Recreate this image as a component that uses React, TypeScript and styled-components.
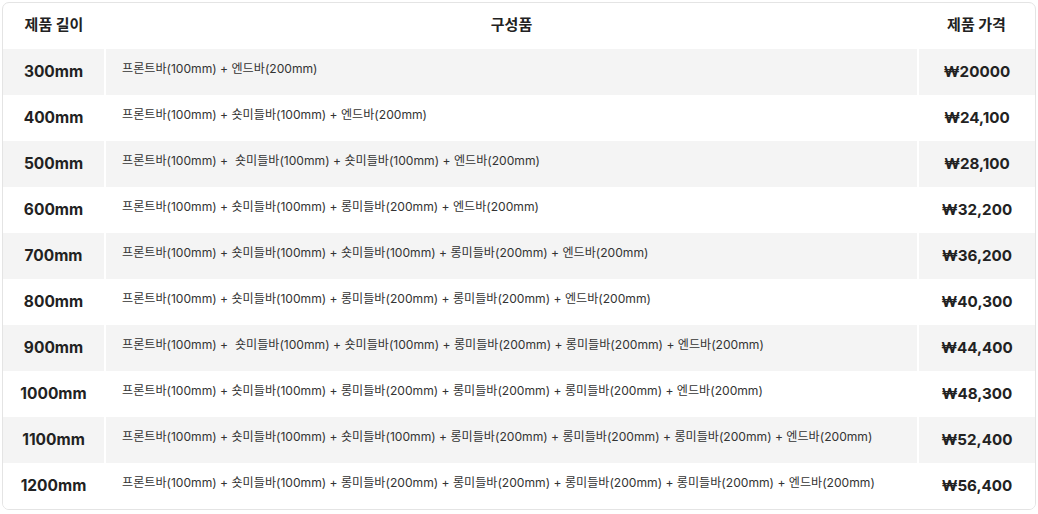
import type { FC } from "react";
import styled, { createGlobalStyle } from "styled-components";

interface PriceRow {
  length: string;
  parts: string;
  price: string;
}

const rows: PriceRow[] = [
  { length: "300mm", parts: "프론트바(100mm) + 엔드바(200mm)", price: "₩20000" },
  { length: "400mm", parts: "프론트바(100mm) + 숏미들바(100mm) + 엔드바(200mm)", price: "₩24,100" },
  {
    length: "500mm",
    parts: "프론트바(100mm) +  숏미들바(100mm) + 숏미들바(100mm) + 엔드바(200mm)",
    price: "₩28,100",
  },
  {
    length: "600mm",
    parts: "프론트바(100mm) + 숏미들바(100mm) + 롱미들바(200mm) + 엔드바(200mm)",
    price: "₩32,200",
  },
  {
    length: "700mm",
    parts:
      "프론트바(100mm) + 숏미들바(100mm) + 숏미들바(100mm) + 롱미들바(200mm) + 엔드바(200mm)",
    price: "₩36,200",
  },
  {
    length: "800mm",
    parts:
      "프론트바(100mm) + 숏미들바(100mm) + 롱미들바(200mm) + 롱미들바(200mm) + 엔드바(200mm)",
    price: "₩40,300",
  },
  {
    length: "900mm",
    parts:
      "프론트바(100mm) +  숏미들바(100mm) + 숏미들바(100mm) + 롱미들바(200mm) + 롱미들바(200mm) + 엔드바(200mm)",
    price: "₩44,400",
  },
  {
    length: "1000mm",
    parts:
      "프론트바(100mm) + 숏미들바(100mm) + 롱미들바(200mm) + 롱미들바(200mm) + 롱미들바(200mm) + 엔드바(200mm)",
    price: "₩48,300",
  },
  {
    length: "1100mm",
    parts:
      "프론트바(100mm) + 숏미들바(100mm) + 숏미들바(100mm) + 롱미들바(200mm) + 롱미들바(200mm) + 롱미들바(200mm) + 엔드바(200mm)",
    price: "₩52,400",
  },
  {
    length: "1200mm",
    parts:
      "프론트바(100mm) + 숏미들바(100mm) + 롱미들바(200mm) + 롱미들바(200mm) + 롱미들바(200mm) + 롱미들바(200mm) + 엔드바(200mm)",
    price: "₩56,400",
  },
];

const GlobalStyle = createGlobalStyle`
  body {
    margin: 0;
    background: #ffffff;
    font-family: Inter, "Noto Sans CJK KR", sans-serif;
    color: #222222;
  }
`;

const Card = styled.div`
  margin: 2px;
  width: 1034px;
  box-sizing: border-box;
  border: 1px solid #e4e4e4;
  border-radius: 7px;
  overflow: hidden;
  background: #ffffff;
`;

const Table = styled.table`
  width: 100%;
  border-collapse: collapse;
  table-layout: fixed;
`;

const HeadRow = styled.tr`
  height: 46px;
`;

const HeadCell = styled.th<{ $width?: number }>`
  width: ${(p) => (p.$width ? `${p.$width}px` : "auto")};
  padding: 0 0 3px;
  font-size: 15px;
  line-height: 18px;
  font-weight: 700;
  color: #222222;
  text-align: center;
  vertical-align: middle;
`;

const Row = styled.tr<{ $shaded: boolean }>`
  height: 46px;
  background: ${(p) => (p.$shaded ? "#f4f4f4" : "#ffffff")};
`;

const Cell = styled.td`
  padding: 0;
  line-height: 18px;
  border-left: 2px solid #ffffff;
  vertical-align: middle;

  &:first-child {
    border-left: none;
  }
`;

const LengthCell = styled(Cell)`
  font-size: 15.5px;
  font-weight: 700;
  text-align: center;
`;

const PartsCell = styled(Cell)`
  font-size: 12.1px;
  font-weight: 400;
  color: #333333;
  text-align: left;
  padding: 0 0 6px 16px;
  white-space: pre;
`;

const PriceCell = styled(Cell)`
  font-size: 15.2px;
  font-weight: 700;
  text-align: center;
`;

const App: FC = () => (
  <>
    <GlobalStyle />
    <Card>
      <Table>
        <thead>
          <HeadRow>
            <HeadCell $width={102}>제품 길이</HeadCell>
            <HeadCell>구성품</HeadCell>
            <HeadCell $width={117}>제품 가격</HeadCell>
          </HeadRow>
        </thead>
        <tbody>
          {rows.map((row, index) => (
            <Row key={row.length} $shaded={index % 2 === 0}>
              <LengthCell>{row.length}</LengthCell>
              <PartsCell>{row.parts}</PartsCell>
              <PriceCell>{row.price}</PriceCell>
            </Row>
          ))}
        </tbody>
      </Table>
    </Card>
  </>
);

export default App;
